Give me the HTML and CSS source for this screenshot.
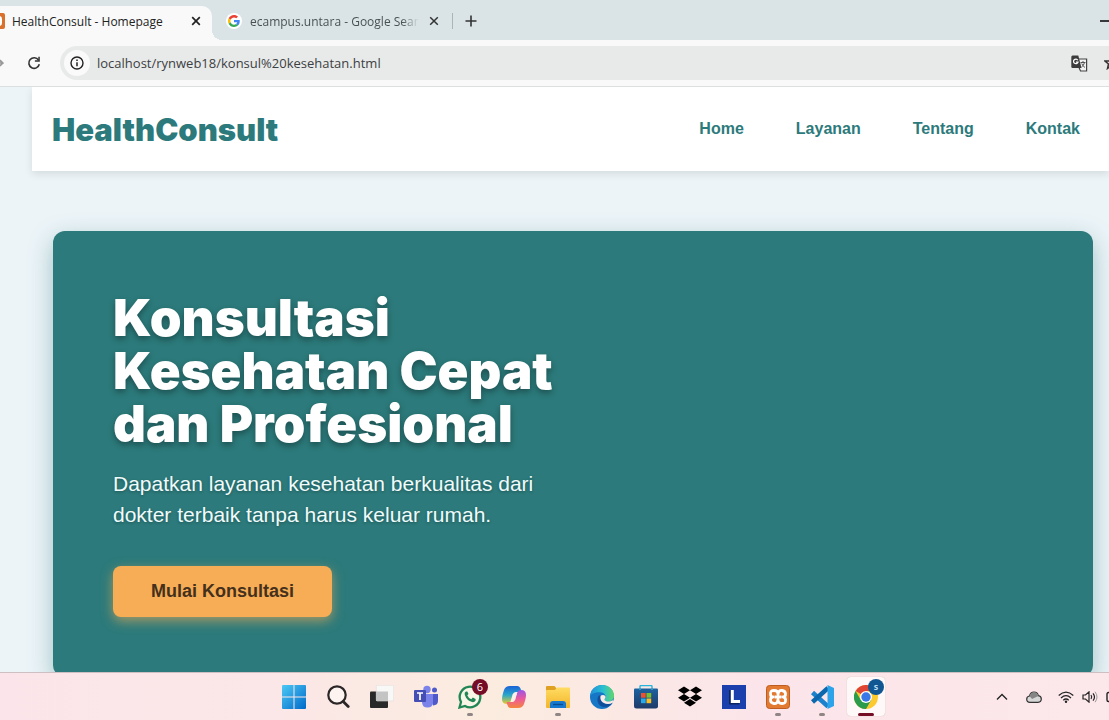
FILE: index.html
```html
<!DOCTYPE html>
<html lang="id">
<head>
<meta charset="utf-8">
<title>HealthConsult - Homepage</title>
<link rel="stylesheet" href="styles.css">
</head>
<body>
<div class="tabs">
  <div class="tab active">
    <svg class="fav-cut" width="5" height="16" viewBox="11 0 5 16"><rect width="16" height="16" rx="2" fill="#d9702d"/><rect x="3" y="3" width="10" height="10" rx="3" fill="#fff"/><rect x="5" y="5" width="6" height="6" fill="#e58b4f"/></svg>
    <button class="tab-title">HealthConsult - Homepage</button>
    <button class="close" aria-label="Tutup tab"><svg width="10" height="10" viewBox="0 0 10 10"><path d="M1.2 1.2l7.6 7.6M8.8 1.2L1.2 8.8" stroke="#222" stroke-width="1.7"/></svg></button>
  </div>
  <div class="tab second">
    <span class="google"><svg width="12" height="12" viewBox="0 0 48 48"><path fill="#ea4335" d="M24 9.5c3.5 0 6.700 1.200 9.200 3.600l6.900-6.900C35.900 2.400 30.500 0 24 0 14.600 0 6.500 5.400 2.600 13.200l8 6.200C12.400 13.700 17.700 9.500 24 9.500z"/><path fill="#4285f4" d="M47 24.600c0-1.600-.2-3.100-.4-4.600H24v9h12.900c-.6 3-2.200 5.500-4.800 7.200l7.700 6C44.400 38 47 31.800 47 24.600z"/><path fill="#fbbc05" d="M10.500 28.600c-.5-1.500-.8-3-.8-4.600s.3-3.100.8-4.600l-8-6.200C.9 16.500 0 20.100 0 24s.9 7.500 2.600 10.800z"/><path fill="#34a853" d="M24 48c6.500 0 11.900-2.100 15.900-5.800l-7.700-6c-2.200 1.500-4.900 2.300-8.200 2.300-6.300 0-11.600-4.200-13.500-9.900l-8 6.200C6.500 42.600 14.600 48 24 48z"/></svg></span>
    <button class="tab-title">ecampus.untara - Google Search</button>
    <button class="close" aria-label="Tutup tab"><svg width="10" height="10" viewBox="0 0 10 10"><path d="M1.200 1.200l7.600 7.600M8.800 1.200L1.200 8.800" stroke="#333" stroke-width="1.500"/></svg></button>
  </div>
  <span class="divider"></span>
  <button class="close" aria-label="Tab baru"><svg width="12" height="12" viewBox="0 0 12 12"><path d="M6 .5v11M.5 6h11" stroke="#333" stroke-width="1.600"/></svg></button>
  <button class="minimize" aria-label="Minimalkan"><svg width="9" height="2"><path d="M0 1h9" stroke="#000" stroke-width="1.500"/></svg></button>
</div>
<div class="toolbar">
  <button class="forward" aria-label="Maju"><svg width="4" height="12" viewBox="0 0 4 12"><path d="M-3 1.500L3 6l-6 4.500M-4 6h7M0 3l3 3-3 3" fill="none" stroke="#999" stroke-width="1.400"/></svg></button>
  <button class="reload" aria-label="Muat ulang"><svg width="14" height="14" viewBox="0 0 14 14"><path d="M11.500 4A5.300 5.300 0 1 0 12.300 8.300" fill="none" stroke="#333" stroke-width="1.600"/><path d="M12.800.8v5H7.900V4.300h3.400V.8z" fill="#333"/></svg></button>
  <div class="address">
    <button class="info" aria-label="Info situs"><svg width="14" height="14" viewBox="0 0 14 14"><circle cx="7" cy="7" r="6" fill="none" stroke="#222" stroke-width="1.400"/><path d="M7 6.200v4M7 3.600v1.400" stroke="#222" stroke-width="1.500"/></svg></button>
    <input class="url" aria-label="Alamat" value="localhost/rynweb18/konsul%20kesehatan.html">
    <button class="translate" aria-label="Terjemahkan"><svg width="17" height="17" viewBox="0 0 17 17"><path d="M8 4h7.600v12H9.500L8 12.500" fill="#f3f3f3" stroke="#444" stroke-width="1.200"/><path d="M1.500.5h5.800L10.500 13H1.500Q.3 13 .3 11.500V2Q.3.500 1.500.5z" fill="#3c3c3c"/><path d="M6.800 5.200A2.300 2.300 0 1 0 7 7.200H4.900" fill="none" stroke="#fff" stroke-width="1.200"/><path d="M9.500 7.500h5M12 6v1.500M13.500 7.500q-.6 3-3 4.500M10.700 8.500q1 2.500 3.300 4" fill="none" stroke="#555"/></svg></button>
    <button class="star" aria-label="Markahi"><svg width="5" height="14" viewBox="0 0 5 14"><path d="M7 1L5.300 5H1l3.500 3-1 4.500L7 10" fill="none" stroke="#333" stroke-width="1.500"/></svg></button>
  </div>
</div>
<main class="page">
  <div class="container">
    <header class="site-header">
      <div class="logo">HealthConsult</div>
      <nav class="nav"><a href="#home">Home</a><a href="#layanan">Layanan</a><a href="#tentang">Tentang</a><a href="#kontak">Kontak</a></nav>
    </header>
    <section class="hero">
      <h1>Konsultasi<br>Kesehatan Cepat<br>dan Profesional</h1>
      <p>Dapatkan layanan kesehatan berkualitas dari<br>dokter terbaik tanpa harus keluar rumah.</p>
      <button class="cta">Mulai Konsultasi</button>
    </section>
  </div>
</main>
<footer class="taskbar">
  <svg width="0" height="0" class="defs"><defs>
    <linearGradient id="win" x2="1" y2="1"><stop stop-color="#4cc9f5"/><stop offset="1" stop-color="#0069c9"/></linearGradient>
    <linearGradient id="copA" x2="0" y2="1"><stop stop-color="#1b62d8"/><stop offset=".5" stop-color="#29a7c9"/><stop offset="1" stop-color="#e8cc2c"/></linearGradient>
    <linearGradient id="copB" x2="0" y2="1"><stop stop-color="#9b55e8"/><stop offset=".5" stop-color="#ec5a9a"/><stop offset="1" stop-color="#f6863c"/></linearGradient>
    <linearGradient id="fold" x2="0" y2="1"><stop stop-color="#ffdc62"/><stop offset="1" stop-color="#f3b52c"/></linearGradient>
    <linearGradient id="edgeA" x2="1"><stop stop-color="#1d8fdc"/><stop offset=".55" stop-color="#2bbfd0"/><stop offset="1" stop-color="#63d768"/></linearGradient>
    <linearGradient id="store" x2="0" y2="1"><stop stop-color="#1d62a0"/><stop offset="1" stop-color="#1f3a67"/></linearGradient>
  </defs></svg>
  <div class="apps">
    <button class="app" aria-label="Mulai"><svg viewBox="0 0 24 24"><path fill="url(#win)" d="M1 0h10.500v11.500H0V1q0-1 1-1zM12.500 0H23q1 0 1 1v10.500H12.500zM0 12.500h11.500V24H1q-1 0-1-1zM12.500 12.500H24V23q0 1-1 1H12.500z"/></svg></button>
    <button class="app" aria-label="Cari"><svg viewBox="0 0 24 24"><circle cx="11" cy="10" r="8.700" fill="#fff7" stroke="#2b2728" stroke-width="2.200"/><path d="M17.200 16.500l5 5" stroke="#2b2728" stroke-width="2.800" stroke-linecap="round"/></svg></button>
    <button class="app" aria-label="Tampilan tugas"><svg viewBox="0 0 24 24"><rect y="6.500" width="18" height="16.500" rx="1" fill="#292929"/><rect x="6.300" y=".3" width="17.400" height="15.700" rx="1" fill="#f8f8f7" stroke="#e2dcda" stroke-width=".6"/><path d="M6 6.500h12V16H6z" fill="#c4c4c4"/></svg></button>
    <button class="app" aria-label="Teams"><svg viewBox="0 0 24 24"><circle cx="13" cy="4.500" r="3.700" fill="#7b83eb"/><circle cx="20.500" cy="5" r="2.500" fill="#5059c9"/><path d="M15 9h9v7q0 4-5 4.500z" fill="#5059c9"/><path d="M8 9h11v8q0 5.500-5.500 5.500T8 17z" fill="#7b83eb"/><rect x="0" y="5" width="12" height="12" rx="1" fill="#454eb4"/><path d="M3 8h6M6 8v7" stroke="#fff" stroke-width="1.700"/></svg></button>
    <button class="app" aria-label="WhatsApp, 6 pesan"><svg viewBox="0 0 24 24"><path d="M1.500 22.500L3 17A10.300 10.300 0 1 1 7 21z" fill="#f9f5e6" stroke="#218555" stroke-width="2.300"/><path d="M8 6.500q-2 1-1.200 3.400 2 5.500 7.200 7.200 2.600.6 3.600-1.600V14l-2.800-1.400-1.500 1.600q-3-1.200-4-4l1.200-1.200L9.300 6.500z" fill="#218555"/></svg><span class="badge">6</span><i class="dot"></i></button>
    <button class="app" aria-label="Copilot"><svg viewBox="0 0 24 24"><path d="M8 1h7q3 0 4 4l.6 2H15q-3 0-4 3L9 16q-1 3-4 3-5 0-5-5 0-3 2-9 1.400-4 6-4z" fill="url(#copA)"/><path d="M16 23H9q-3 0-4-4l-.4-2H9q3 0 4-3l2-6q1-3 4-3 5 0 5 5 0 3-2 9-1.400 4-6 4z" fill="url(#copB)"/><path d="M10.600 9.500Q11.500 7 14 7h1.300l-2 7.500Q12.300 17 10 17H8.500z" fill="#fcf0e8"/></svg></button>
    <button class="app" aria-label="File Explorer"><svg viewBox="0 0 24 24"><path d="M1 1h7.500L11 4v4H0V2q0-1 1-1z" fill="#e0a022"/><path d="M1 5h8l2-2.500h12q1 0 1 1V22q0 1-1 1H1q-1 0-1-1V6q0-1 1-1z" fill="url(#fold)"/><path d="M4 23v-4q0-3 3-3h10q3 0 3 3v4z" fill="#1679cf"/><path d="M7 19.500h10" stroke="#0a4c91" stroke-width="1.400"/></svg><i class="dot"></i></button>
    <button class="app" aria-label="Edge"><svg viewBox="0 0 24 24"><circle cx="12" cy="12" r="12" fill="#1577c5"/><path d="M0 11C1 4 6 0 12 0c7 0 12 5 12 10.500 0 4-3 6-6 6-3.200 0-4-1.500-3.200-2.800C17 10.500 14 7.200 10 7.200 5 7 1 9 0 11z" fill="url(#edgeA)"/><path d="M9 10.500c-3.200 3-1.500 11.500 6 11.500 3.500 0 6-2 7.600-4.300-4 2.300-9.500 1.300-11.500-2.200-1-2-.8-3.700.2-5z" fill="#114f9c"/><path d="M10.800 10.500q3-1.500 4.500.8.600 1.300-.5 2.400-1 1.600 1.500 2.500 3.500 1 6.300-1l1.300 1-1.300 1.500c-4 2.300-9.500 1.300-11.500-2.200-1-2-.8-3.700-.3-5z" fill="#fcebe5"/></svg></button>
    <button class="app" aria-label="Microsoft Store"><svg viewBox="0 0 24 24"><path d="M6 5V1.500q0-1 1-1h10q1 0 1 1V5" fill="none" stroke="#29b5d9" stroke-width="1.400"/><path d="M1 3.500h22q1 0 1 1V21q0 2.500-2.500 2.500h-19Q0 23.500 0 21V4.500q0-1 1-1z" fill="url(#store)"/><path d="M6 5V3.500M18 5V3.500" stroke="#29b5d9" stroke-width="1.400"/><path d="M7 8h4.700v4.700H7z" fill="#ee5130"/><path d="M12.500 8h4.700v4.700h-4.700z" fill="#80bd2c"/><path d="M7 13.500h4.700v4.700H7z" fill="#28a9e8"/><path d="M12.500 13.500h4.700v4.700h-4.700z" fill="#f9bf27"/></svg></button>
    <button class="app" aria-label="Dropbox"><svg viewBox="0 0 24 24"><path d="M6 1.500l6 3.800-6 3.800-6-3.800zM18 1.500l6 3.800-6 3.800-6-3.800zM6 9l6 3.800-6 3.800-6-3.800zM18 9l6 3.800-6 3.800-6-3.800zM12 14l6 3.800-6 3.800-6-3.800z"/></svg></button>
    <button class="app" aria-label="Aplikasi L"><svg viewBox="0 0 24 24"><rect width="24" height="24" fill="#1c3fae"/><path d="M9 5v12.500h8.500" fill="none" stroke="#0c245f" stroke-width="4"/><path d="M10.300 5v11.500H18" fill="none" stroke="#fff" stroke-width="3"/></svg></button>
    <button class="app" aria-label="XAMPP"><svg viewBox="0 0 24 24"><rect x=".5" y=".5" width="23" height="23" rx="3" fill="#e27a32" stroke="#bd5d20"/><path d="M12 9.500Q12 5.500 8 5.500T4.500 9Q4.500 12 7 12 4.500 12 4.500 15T8 18.500 12 14.500Q12 18.500 16 18.500T19.500 15Q19.500 12 17 12 19.500 12 19.500 9T16 5.500 12 9.500zM8.500 12h7" fill="none" stroke="#fff" stroke-width="2.800" stroke-linejoin="round"/></svg><i class="dot"></i></button>
    <button class="app" aria-label="VS Code"><svg viewBox="0 0 24 24"><path d="M2.500 7.500L18 21.500" stroke="#1b83ce" stroke-width="4.500"/><path d="M2.500 17L18 3" stroke="#0c68ae" stroke-width="4.500"/><path d="M17.500 0L24 3v18l-6.500 3z" fill="#2da3ea"/></svg><i class="dot"></i></button>
    <button class="app current" aria-label="Chrome"><svg viewBox="0 0 24 24"><circle cx="12" cy="12" r="12" fill="#fcca2e"/><path d="M12 12L1.600 6A12 12 0 0 1 22.400 6z" fill="#df4434"/><path d="M1.600 6A12 12 0 0 0 12 24l5.200-9L12 12 6.800 15z" fill="#2b9b4c"/><path d="M12 6h10.400L17 14z" fill="#fcca2e"/><circle cx="12" cy="12" r="6" fill="#fff"/><circle cx="12" cy="12" r="4.700" fill="#3b78e7"/></svg><span class="badge profile">s</span><i class="dot"></i></button>
  </div>
  <div class="tray">
    <button aria-label="Ikon tersembunyi"><svg width="12" height="12" viewBox="0 0 12 12"><path d="M1 8.500l5-5 5 5" fill="none" stroke="#222" stroke-width="1.300"/></svg></button>
    <button aria-label="OneDrive"><svg width="16" height="12" viewBox="0 0 16 12"><path d="M4 11.300q-3.300 0-3.300-3T3.500 5Q4.500 1 8 1q3.600 0 4.300 3.600 3 .4 3 3.400T12 11.300z" fill="#d6d6d6" stroke="#333" stroke-width="1.200"/><path d="M3.500 5Q5 1.300 8 1.300q3.400 0 4.300 3.600L6 8z" fill="#858585"/></svg></button>
    <button aria-label="Wi-Fi"><svg width="16" height="12" viewBox="0 0 16 12"><path d="M.7 4.500q7.300-6.800 14.600 0M3 7q5-4.600 10 0M5.300 9.200q2.700-2.400 5.400 0" fill="none" stroke="#222" stroke-width="1.200"/><circle cx="8" cy="10.800" r="1.200" fill="#222"/></svg></button>
    <button aria-label="Volume"><svg width="16" height="12" viewBox="0 0 16 12"><path d="M1 4h2.500L7 .9v10.200L3.500 8H1z" fill="none" stroke="#222" stroke-width="1.200"/><path d="M9 4q1.500 2 0 4M11 2.300q3 3.700 0 7.400" fill="none" stroke="#222" stroke-width="1.200"/><path d="M13 .8q4 5.200 0 10.400" fill="none" stroke="#999"/></svg></button>
    <button aria-label="Baterai"><svg width="3" height="12" viewBox="0 0 3 12"><path d="M4 1.500H2.500Q1 1.500 1 3v6q0 1.500 1.500 1.500H4" fill="none" stroke="#222" stroke-width="1.400"/></svg></button>
  </div>
</footer>
</body>
</html>
```
FILE: styles.css
```css
* { box-sizing: border-box; }
body {
  margin: 0;
  height: 100vh;
  display: flex;
  flex-direction: column;
  overflow: hidden;
  font-family: "Liberation Sans", Arial, sans-serif;
}
button {
  border: 0;
  padding: 0;
  background: none;
  font: inherit;
  color: inherit;
  display: flex;
  align-items: center;
  justify-content: center;
  flex: none;
}
svg { display: block; flex: none; }

/* Browser tabs */
.tabs {
  flex: none;
  height: 40px;
  padding-top: 6px;
  display: flex;
  align-items: center;
  background: #dae4e6;
  font-family: "Open Sans", "Noto Sans", sans-serif;
  font-size: 12px;
}
.tab { display: flex; align-items: center; height: 34px; padding-bottom: 4px; }
.active {
  position: relative;
  width: 212px;
  padding-right: 10px;
  background: #f9f9f9;
  border-radius: 0 10px 0 0;
  color: #222;
}
.active::after {
  content: "";
  position: absolute;
  left: 100%;
  bottom: 0;
  width: 10px;
  height: 10px;
  background: radial-gradient(circle at 100% 0, transparent 10px, #f9f9f9 10px);
}
.active .tab-title { margin-left: 7px; }
.active .close { margin-left: auto; }
.close { width: 12px; height: 12px; }
.tabs > .close { margin: 0 12px 4px; }
.second { width: 240px; padding-left: 14px; color: #4a5153; }
.google {
  width: 16px;
  height: 16px;
  display: grid;
  place-items: center;
  border-radius: 50%;
  background: #fff;
}
.second .tab-title {
  width: 169px;
  margin: 0 9px 0 8px;
  justify-content: flex-start;
  overflow: hidden;
  white-space: nowrap;
  mask-image: linear-gradient(90deg, #000 90%, transparent);
}
.divider { width: 1px; height: 16px; margin-bottom: 4px; background: #a9b6b9; }
.minimize { margin: 0 0 4px auto; height: 12px; }

/* Address bar */
.toolbar {
  flex: none;
  height: 47px;
  display: flex;
  align-items: center;
  background: #f9f9f9;
  border-bottom: 1px solid #dcdfdf;
}
.reload { margin: 0 19px 0 23px; }
.forward { width: 4px; }
.address {
  flex: 1;
  height: 34px;
  min-width: 0;
  display: flex;
  align-items: center;
  padding-left: 4px;
  border-radius: 17px 0 0 17px;
  background: #e8eaea;
}
.info { width: 26px; height: 26px; border-radius: 50%; background: #fafafa; }
.url {
  flex: 1;
  min-width: 0;
  margin-left: 7px;
  padding: 0;
  border: 0;
  background: none;
  color: #3d4042;
  font-family: "Open Sans", "Noto Sans", sans-serif;
  font-size: 13px;
}
.star { margin-left: 16px; }

/* Site */
.page { flex: 1; min-height: 0; overflow: hidden; background: #ecf4f8; }
.container { margin-left: 32px; }
.site-header {
  height: 84px;
  display: flex;
  align-items: center;
  justify-content: space-between;
  padding: 0 29px 0 20px;
  background: #fff;
  box-shadow: 0 3px 8px rgba(0, 0, 0, .1);
}
.logo { font-family: Inter, "Arial Black", sans-serif; font-weight: 900; font-size: 31px; color: #2c7a7b; }
.nav { display: flex; gap: 52px; }
.nav a { color: #2c7a7b; font-size: 16px; font-weight: 700; text-decoration: none; }
.hero {
  margin: 60px 16px 0 21px;
  padding: 60px;
  border-radius: 12px;
  background: #2c7a7b;
  box-shadow: 0 8px 24px rgba(44, 122, 123, .4);
  color: #fff;
}
.hero h1 {
  margin: 0 0 18px;
  font: 900 51px/53px Inter, "Arial Black", sans-serif;
  text-shadow: 0 3px 6px rgba(0, 0, 0, .35);
}
.hero p {
  margin: 0 0 36px;
  font-size: 21px;
  line-height: 31px;
  color: #f0fbfb;
  text-shadow: 0 1px 3px rgba(0, 0, 0, .3);
}
.cta {
  height: 51px;
  padding: 0 38px;
  border-radius: 8px;
  background: #f6ad55;
  box-shadow: 0 4px 12px rgba(246, 173, 85, .6);
  color: #44301c;
  font-size: 18px;
  font-weight: 700;
}

/* Taskbar */
.taskbar {
  position: relative;
  flex: none;
  height: 48px;
  display: flex;
  align-items: center;
  justify-content: space-between;
  padding-left: 272px;
  border-top: 1px solid #cdbfc2;
  background: linear-gradient(90deg, #fbe5ea, #fbe7e7 25%, #fbecdf 44%, #fbe8e4 56%, #fbe5ea 68%, #fce7ea);
}
.defs { position: absolute; }
.apps { display: flex; }
.app { position: relative; width: 44px; height: 47px; }
.app > svg { width: 24px; height: 24px; }
.dot {
  position: absolute;
  bottom: 4px;
  left: 19px;
  width: 6px;
  height: 3px;
  border-radius: 2px;
  background: #8f8585;
}
.badge {
  position: absolute;
  top: 6px;
  left: 24px;
  width: 16px;
  height: 16px;
  border-radius: 50%;
  background: #750d27;
  color: #fff;
  font: 11px/16px "Open Sans", sans-serif;
  text-align: center;
}
.profile { background: #105693; color: #b7d8ef; font-size: 9px; font-weight: 700; }
.current::before {
  content: "";
  position: absolute;
  inset: 4px 3px;
  border-radius: 4px;
  background: #fff8f9;
  box-shadow: 0 0 1px #bba;
}
.current > svg { position: relative; }
.current .dot { left: 14px; width: 16px; background: #750d27; }
.tray { display: flex; align-items: center; }
.tray button { margin-left: 8px; }
.tray button:nth-child(2) { margin-left: 18px; }
.tray button:nth-child(3) { margin-left: 16px; }
```
